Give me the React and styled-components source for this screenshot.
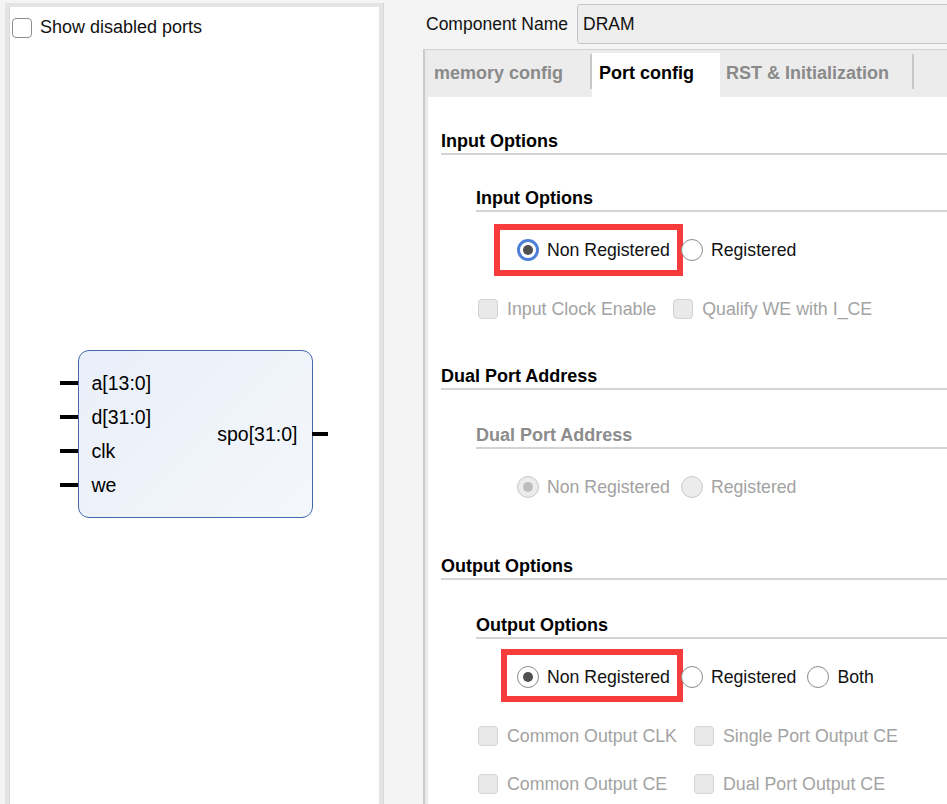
import React from "react";
import styled, { createGlobalStyle } from "styled-components";

const GlobalStyle = createGlobalStyle`
  html, body {
    margin: 0;
    padding: 0;
    background: #f4f4f4;
    overflow: hidden;
  }
  body {
    font-family: "Liberation Sans", Arial, sans-serif;
    color: #111;
  }
`;

const Window = styled.div`
  display: flex;
  width: 947px;
  height: 804px;
  overflow: hidden;
`;

/* ---------- left: symbol preview ---------- */

const PortsPanel = styled.div`
  flex: none;
  width: 370px;
  margin: 3px 0 0 5px;
  background: #fff;
  border: 4px solid #e4e4e4;
  border-bottom: none;
  box-shadow: inset 1px 0 0 #d8d8d8, 1px 0 0 #d8d8d8;
  display: flex;
  flex-direction: column;
`;

const ShowRow = styled.label`
  display: flex;
  align-items: center;
  gap: 8px;
  padding: 10px 0 0 3px;
  font-size: 18px;
`;

const Box = styled.span`
  flex: none;
  width: 20px;
  height: 20px;
  box-sizing: border-box;
  border-radius: 4px;
  background: ${(p) => (p.$disabled ? "#e9e9e9" : "#fff")};
  border: ${(p) => (p.$disabled ? "1px solid #d2d2d2" : "1.5px solid #8d8d8d")};
`;

const Diagram = styled.div`
  margin-top: 312px;
  padding-left: 2px;
  display: flex;
  justify-content: center;
`;

const Block = styled.div`
  width: 235px;
  height: 168px;
  box-sizing: border-box;
  border: 1px solid #4568ad;
  border-radius: 11px;
  background: linear-gradient(135deg, #e9eff9 0%, #f4f7fb 100%);
  display: flex;
  justify-content: space-between;
  align-items: center;
  font-size: 19.5px;
  color: #000;
`;

const Inputs = styled.div`
  display: flex;
  flex-direction: column;
`;

const PortRow = styled.div`
  display: flex;
  align-items: center;
  height: 34px;
`;

const Stub = styled.span`
  flex: none;
  width: ${(p) => (p.$out ? 16 : 18)}px;
  height: 4px;
  background: #000;
  margin: ${(p) => (p.$out ? "0 -16px 0 14px" : "0 14px 0 -19px")};
`;

const Output = styled.div`
  display: flex;
  align-items: center;
`;

/* ---------- right: settings ---------- */

const Main = styled.div`
  flex: none;
  width: 600px;
  padding: 4px 0 0 40px;
  display: flex;
  flex-direction: column;
`;

const NameRow = styled.div`
  display: flex;
  align-items: center;
  gap: 9px;
  margin-left: 3px;
  font-size: 17.5px;
`;

const NameField = styled.div`
  flex: none;
  width: 420px;
  height: 40px;
  box-sizing: border-box;
  padding-left: 5px;
  display: flex;
  align-items: center;
  background: #eeeeee;
  border: 1px solid #c4c4c4;
  border-radius: 3px;
  font-size: 17.5px;
`;

const TabPane = styled.div`
  flex: 1;
  margin-top: 5px;
  border-top: 1px solid #d2d2d2;
  border-left: 2px solid #cbcbcb;
  padding-left: 3px;
  background: #e9e9e9;
  display: flex;
  flex-direction: column;
`;

const TabBar = styled.div`
  height: 47px;
  padding-top: 3px;
  box-sizing: border-box;
  background: #ececec;
  display: flex;
  align-items: stretch;
`;

const Tab = styled.div`
  display: flex;
  align-items: center;
  padding: 0 ${(p) => p.$pr}px 4px ${(p) => p.$pl}px;
  font-size: 18px;
  font-weight: 700;
  color: ${(p) => (p.$active ? "#000" : "#8a8a8a")};
  background: ${(p) => (p.$active ? "#fff" : "transparent")};
`;

const Divider = styled.span`
  flex: none;
  align-self: flex-start;
  width: 2px;
  height: 35px;
  margin-top: 1px;
  background: #c7c7c7;
`;

const Content = styled.div`
  flex: 1;
  background: #fff;
  padding: 33px 0 0 13px;
`;

const Header = styled.div`
  margin-top: ${(p) => p.$mt || 0}px;
  line-height: 22px;
  padding-bottom: 1px;
  border-bottom: 2px solid #d4d4d4;
  font-size: 18px;
  font-weight: 700;
  color: ${(p) => (p.$disabled ? "#8c8c8c" : "#000")};
`;

const Group = styled.div`
  margin-left: 35px;
`;

const RadioRow = styled.div`
  display: flex;
  align-items: center;
  height: 24px;
  margin-top: 26px;
  padding-left: 41px;
`;

const Option = styled.span`
  position: relative;
  display: inline-flex;
  align-items: center;
  gap: 8px;
  margin-right: 11px;
  font-size: 17.7px;
  color: ${(p) => (p.$disabled ? "#a2a2a2" : "#111")};
  ${(p) =>
    p.$box &&
    `&::after {
      content: "";
      position: absolute;
      left: -${p.$box.left}px;
      right: -13px;
      top: -${p.$box.top}px;
      bottom: -${p.$box.bottom}px;
      border: 6px solid #f83b3b;
      pointer-events: none;
    }`}
`;

const RadioDot = styled.span`
  flex: none;
  width: 22px;
  height: 22px;
  box-sizing: border-box;
  border-radius: 50%;
  display: flex;
  align-items: center;
  justify-content: center;
  background: ${(p) => (p.$disabled ? "#ececec" : "#fff")};
  border: ${(p) =>
    p.$focused
      ? "3px solid #4c7fd6"
      : `1.5px solid ${p.$disabled ? "#c9c9c9" : "#8c8c8c"}`};
  &::after {
    content: "";
    display: ${(p) => (p.$checked ? "block" : "none")};
    width: 10px;
    height: 10px;
    border-radius: 50%;
    background: ${(p) => (p.$disabled ? "#bdbdbd" : "#505050")};
  }
`;

const CheckGrid = styled.div`
  display: grid;
  grid-template-columns: repeat(2, max-content);
  column-gap: 17px;
  row-gap: 26px;
  margin-top: 36px;
  padding-left: 2px;
`;

const CheckItem = styled.span`
  display: inline-flex;
  align-items: center;
  gap: 9px;
  height: 22px;
  font-size: 17.8px;
  color: #a3a3a3;
`;

function Radio({ label, checked, focused, disabled, box }) {
  return (
    <Option $disabled={disabled} $box={box}>
      <RadioDot $checked={checked} $focused={focused} $disabled={disabled} />
      {label}
    </Option>
  );
}

function Check({ label }) {
  return (
    <CheckItem>
      <Box $disabled />
      {label}
    </CheckItem>
  );
}

const inputPorts = ["a[13:0]", "d[31:0]", "clk", "we"];

export default function App() {
  return (
    <>
      <GlobalStyle />
      <Window>
        <PortsPanel>
          <ShowRow>
            <Box />
            Show disabled ports
          </ShowRow>
          <Diagram>
            <Block>
              <Inputs>
                {inputPorts.map((p) => (
                  <PortRow key={p}>
                    <Stub />
                    {p}
                  </PortRow>
                ))}
              </Inputs>
              <Output>
                spo[31:0]
                <Stub $out />
              </Output>
            </Block>
          </Diagram>
        </PortsPanel>

        <Main>
          <NameRow>
            Component Name
            <NameField>DRAM</NameField>
          </NameRow>
          <TabPane>
            <TabBar>
              <Tab $pl={6} $pr={27}>memory config</Tab>
              <Divider />
              <Tab $active $pl={7} $pr={26}>Port config</Tab>
              <Tab $pl={6} $pr={23}>RST &amp; Initialization</Tab>
              <Divider />
            </TabBar>
            <Content>
              <Header>Input Options</Header>
              <Group>
                <Header $mt={32}>Input Options</Header>
                <RadioRow>
                  <Radio
                    label="Non Registered"
                    checked
                    focused
                    box={{ left: 23, top: 15, bottom: 15 }}
                  />
                  <Radio label="Registered" />
                </RadioRow>
                <CheckGrid>
                  <Check label="Input Clock Enable" />
                  <Check label="Qualify WE with I_CE" />
                </CheckGrid>
              </Group>

              <Header $mt={45}>Dual Port Address</Header>
              <Group>
                <Header $mt={34} $disabled>
                  Dual Port Address
                </Header>
                <RadioRow>
                  <Radio label="Non Registered" checked disabled />
                  <Radio label="Registered" disabled />
                </RadioRow>
              </Group>

              <Header $mt={56}>Output Options</Header>
              <Group>
                <Header $mt={34}>Output Options</Header>
                <RadioRow>
                  <Radio
                    label="Non Registered"
                    checked
                    box={{ left: 16, top: 17, bottom: 14 }}
                  />
                  <Radio label="Registered" />
                  <Radio label="Both" />
                </RadioRow>
                <CheckGrid>
                  <Check label="Common Output CLK" />
                  <Check label="Single Port Output CE" />
                  <Check label="Common Output CE" />
                  <Check label="Dual Port Output CE" />
                </CheckGrid>
              </Group>
            </Content>
          </TabPane>
        </Main>
      </Window>
    </>
  );
}
